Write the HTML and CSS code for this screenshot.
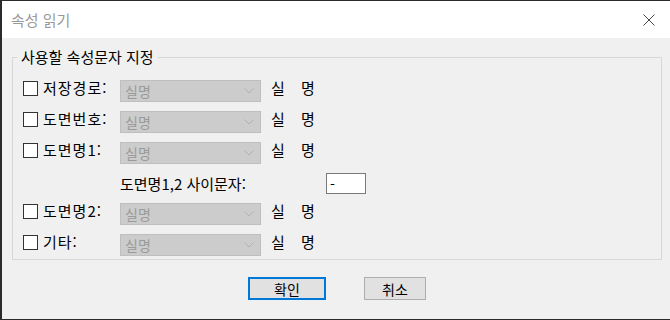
FILE: index.html
```html
<!DOCTYPE html>
<html lang="ko">
<head>
  <meta charset="UTF-8">
  <title>속성 읽기</title>
  <link rel="stylesheet" href="styles.css">
</head>
<body>
  <div class="window">
    <div class="titlebar">
      <span class="title">속성 읽기</span>
      <svg class="close" width="12" height="12" viewBox="0 0 12 12"><path d="M0.5 0.5L11.5 11.5M11.5 0.5L0.5 11.5" stroke="#444" stroke-width="1" fill="none"/></svg>
    </div>
    <fieldset class="group">
      <legend>사용할 속성문자 지정</legend>
      <div class="fields">
        <div class="row">
          <label class="chk"><input type="checkbox">저장경로:</label>
          <div class="combo"><span>실명</span><svg width="10" height="6" viewBox="0 0 10 6"><path d="M0.5 0.5L5 5L9.5 0.5" stroke="#b0b0b0" fill="none"/></svg></div>
          <span class="name">실 명</span>
        </div>
        <div class="row">
          <label class="chk"><input type="checkbox">도면번호:</label>
          <div class="combo"><span>실명</span><svg width="10" height="6" viewBox="0 0 10 6"><path d="M0.5 0.5L5 5L9.5 0.5" stroke="#b0b0b0" fill="none"/></svg></div>
          <span class="name">실 명</span>
        </div>
        <div class="row">
          <label class="chk"><input type="checkbox">도면명1:</label>
          <div class="combo"><span>실명</span><svg width="10" height="6" viewBox="0 0 10 6"><path d="M0.5 0.5L5 5L9.5 0.5" stroke="#b0b0b0" fill="none"/></svg></div>
          <span class="name">실 명</span>
        </div>
        <div class="sep">
          <span>도면명1,2 사이문자:</span>
          <input type="text" value="-">
        </div>
        <div class="row">
          <label class="chk"><input type="checkbox">도면명2:</label>
          <div class="combo"><span>실명</span><svg width="10" height="6" viewBox="0 0 10 6"><path d="M0.5 0.5L5 5L9.5 0.5" stroke="#b0b0b0" fill="none"/></svg></div>
          <span class="name">실 명</span>
        </div>
        <div class="row">
          <label class="chk"><input type="checkbox">기타:</label>
          <div class="combo"><span>실명</span><svg width="10" height="6" viewBox="0 0 10 6"><path d="M0.5 0.5L5 5L9.5 0.5" stroke="#b0b0b0" fill="none"/></svg></div>
          <span class="name">실 명</span>
        </div>
      </div>
    </fieldset>
    <div class="buttons">
      <button class="btn default">확인</button>
      <button class="btn">취소</button>
    </div>
  </div>
</body>
</html>
```

FILE: styles.css
```css
*{box-sizing:border-box}
body{margin:0;font-family:"Noto Sans CJK KR","Noto Sans",sans-serif;color:#000}
.window{width:670px;height:320px;background:#f0f0f0;border-top:1px solid #2b2b2b;border-left:2px solid #2b2b2b;border-bottom:1px solid #2b2b2b;display:flex;flex-direction:column}
.titlebar{height:37px;flex:none;background:#fff;display:flex;align-items:center;justify-content:space-between;padding:0 15px 0 9px}
.title{font-size:15px;line-height:1;color:#999}
.group{margin:9px 8px 0 10px;padding:13px 0 3px 4px;border:1px solid #d7d7d7;min-width:0}
.group legend{padding:0 4px;font-size:15px;line-height:20px}
.fields{display:flex;flex-direction:column;gap:9px;padding-left:6px}
.row{display:grid;grid-template-columns:97px 141px auto;height:22px;align-items:start}
.chk{display:flex;align-items:center;gap:5px;font-size:15px;line-height:16px;letter-spacing:1px}
.chk input{appearance:none;width:15px;height:15px;margin:0;border:1px solid #333;background:#fff}
.combo{height:22px;background:#ccc;border:1px solid #bfbfbf;display:flex;align-items:center;justify-content:space-between;padding:0 6px 0 4px;font-size:14px;color:#9a9a9a}
.name{margin-left:10px;font-size:15px;line-height:16px;word-spacing:12px}
.sep{display:flex;align-items:center;height:21px;padding-left:97px}
.sep span{width:206px;font-size:15px;line-height:16px}
.sep input{width:40px;height:21px;margin:0;padding:0 3px;border:1px solid #7a7a7a;background:#fff;font:14px "Noto Sans CJK KR",sans-serif;color:#000}
.buttons{display:flex;justify-content:center;gap:38px;margin-top:17px;padding-left:2px}
.btn{width:62px;height:23px;padding:0;background:#e1e1e1;border:1px solid #adadad;font:14px "Noto Sans CJK KR",sans-serif;color:#000}
.btn.default{width:78px;border:2px solid #0078d7}
```
